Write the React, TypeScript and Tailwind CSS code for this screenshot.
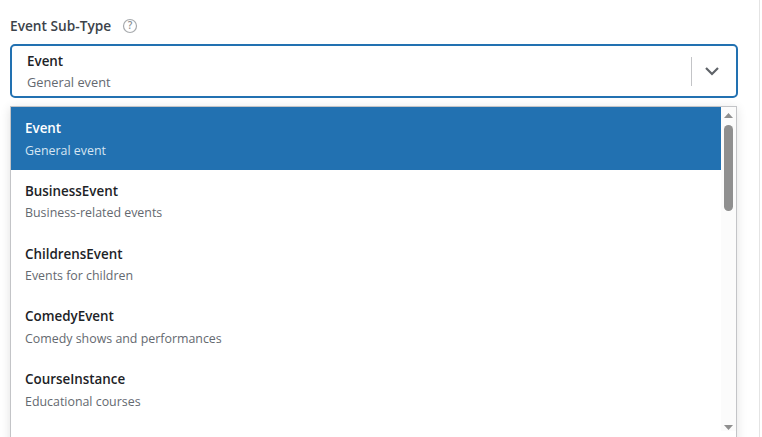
import React from 'react';

const options = [
    { name: 'Event', desc: 'General event' },
    { name: 'BusinessEvent', desc: 'Business-related events' },
    { name: 'ChildrensEvent', desc: 'Events for children' },
    { name: 'ComedyEvent', desc: 'Comedy shows and performances' },
    { name: 'CourseInstance', desc: 'Educational courses' },
];

const App: React.FC = () => {
    return (
        <div className="h-[437px] w-[762px] overflow-hidden bg-white font-['Open_Sans','Noto_Sans',sans-serif]">
            <div className="h-[437px] w-[760px] border-r border-r-[#e4e4e4] pl-[10px] pr-[21px]">
                {/* Label */}
                <div className="flex h-[44px] items-center gap-[11px] pt-[9px] pb-[1px]">
                    <span className="text-[13.7px] font-semibold leading-[18px] text-[#3c434a]">Event Sub-Type</span>
                    <svg width="16" height="16" viewBox="0 0 16 16" fill="none">
                        <circle cx="8" cy="8" r="6.5" stroke="#a7aaad" strokeWidth="1.2" />
                        <text x="8" y="11.3" textAnchor="middle" fontSize="10" fontWeight="600" fill="#8c8f94" fontFamily="Open Sans">?</text>
                    </svg>
                </div>

                {/* Select control */}
                <div className="flex h-[54px] w-[728px] items-center rounded-[5px] border-2 border-[#2271b1] bg-white">
                    <div className="flex-1 pl-[15px] pt-[1px]">
                        <div className="text-[13.4px] font-semibold leading-[18px] text-[#1d2327]">Event</div>
                        <div className="mt-[3px] text-[12.8px] font-medium leading-[18px] text-[#646970]">General event</div>
                    </div>
                    <div className="h-[29px] w-px bg-[#c3c4c7]"></div>
                    <div className="flex w-[44px] justify-center pr-[4px]">
                        <svg width="16" height="10" viewBox="0 0 16 10" fill="none">
                            <path d="M2 2l6 6 6-6" stroke="#5f6368" strokeWidth="2.2" />
                        </svg>
                    </div>
                </div>

                {/* Dropdown */}
                <div className="mt-[8px] flex h-[340px] w-[727px] border-x border-t border-[#c3c4c7] bg-white shadow-[0_2px_10px_rgba(0,0,0,0.12)]">
                    <ul className="w-[710px]">
                        {options.map((opt, i) => (
                            <li key={opt.name} className={`h-[62.75px] pl-[14px] pt-[12px] ${i === 0 ? 'bg-[#2271b1]' : ''}`}>
                                <div className={`text-[13.4px] font-semibold leading-[18px] ${i === 0 ? 'text-white' : 'text-[#1d2327]'}`}>{opt.name}</div>
                                <div className={`mt-[4.5px] text-[12.4px] leading-[18px] ${i === 0 ? 'text-[#d5e5f2]' : 'text-[#646970]'}`}>{opt.desc}</div>
                            </li>
                        ))}
                    </ul>
                    {/* Scrollbar */}
                    <div className="flex h-[324px] w-[15px] flex-col items-center bg-[#fbfbfb]">
                        <svg className="mt-[6px]" width="9" height="5" viewBox="0 0 9 5"><path d="M4.5 0L9 5H0z" fill="#8f8f8f" /></svg>
                        <div className="mt-[7px] h-[86px] w-[9px] rounded-full bg-[#8f8f8f]"></div>
                        <svg className="mt-auto mb-[1px]" width="9" height="5" viewBox="0 0 9 5"><path d="M4.5 5L0 0h9z" fill="#8f8f8f" /></svg>
                    </div>
                </div>
            </div>
        </div>
    );
};

export default App;
